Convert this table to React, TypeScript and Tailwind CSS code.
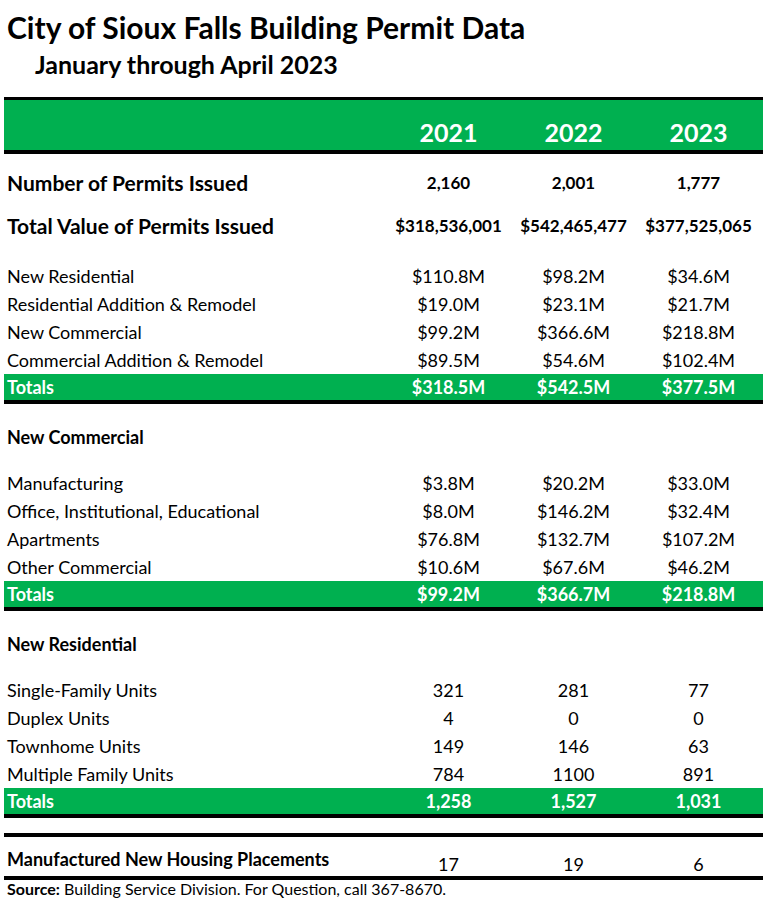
import React from 'react';

const GREEN = 'bg-[#00b050]';

type Row = { label: string; values: string[] };

const VALUE_ROWS: Row[] = [
  { label: 'New Residential', values: ['$110.8M', '$98.2M', '$34.6M'] },
  { label: 'Residential Addition & Remodel', values: ['$19.0M', '$23.1M', '$21.7M'] },
  { label: 'New Commercial', values: ['$99.2M', '$366.6M', '$218.8M'] },
  { label: 'Commercial Addition & Remodel', values: ['$89.5M', '$54.6M', '$102.4M'] },
];

const COMMERCIAL_ROWS: Row[] = [
  { label: 'Manufacturing', values: ['$3.8M', '$20.2M', '$33.0M'] },
  { label: 'Office, Institutional, Educational', values: ['$8.0M', '$146.2M', '$32.4M'] },
  { label: 'Apartments', values: ['$76.8M', '$132.7M', '$107.2M'] },
  { label: 'Other Commercial', values: ['$10.6M', '$67.6M', '$46.2M'] },
];

const RESIDENTIAL_ROWS: Row[] = [
  { label: 'Single-Family Units', values: ['321', '281', '77'] },
  { label: 'Duplex Units', values: ['4', '0', '0'] },
  { label: 'Townhome Units', values: ['149', '146', '63'] },
  { label: 'Multiple Family Units', values: ['784', '1100', '891'] },
];

const cols = 'grid grid-cols-[382px_125px_125px_125px] items-center';

function DataRow({ row }: { row: Row }) {
  return (
    <div className={`${cols} h-[28px] text-[18px]`}>
      <div className="pl-[3px]">{row.label}</div>
      {row.values.map((v, i) => (
        <div key={i} className="text-center">{v}</div>
      ))}
    </div>
  );
}

function TotalsRow({ values }: { values: string[] }) {
  return (
    <div className={`${cols} ${GREEN} h-[26px] border-b-4 border-black text-white font-bold text-[18px] box-content`}>
      <div className="pl-[3px]">Totals</div>
      {values.map((v, i) => (
        <div key={i} className="text-center">{v}</div>
      ))}
    </div>
  );
}

export default function App() {
  return (
    <div className="w-[769px] h-[909px] bg-white text-black font-['Lato',sans-serif] overflow-hidden">
      <div className="pt-[9px] pl-[7px] text-[30px] font-bold leading-[36px]">
        City of Sioux Falls Building Permit Data
      </div>
      <div className="pl-[35px] pt-[5px] text-[25px] font-bold leading-[28px]">
        January through April 2023
      </div>

      <div className="ml-[4px] w-[759px] mt-[19px]">
        {/* Header */}
        <div className={`${cols} ${GREEN} h-[50px] border-t-[3px] border-b-4 border-black box-content`}>
          <div />
          {['2021', '2022', '2023'].map(y => (
            <div key={y} className="text-center text-white font-bold text-[25px] pt-[14px]">{y}</div>
          ))}
        </div>

        {/* Summary */}
        <div className="pt-[8px]">
          <div className={`${cols} h-[42px] font-bold`}>
            <div className="pl-[3px] text-[21px]">Number of Permits Issued</div>
            {['2,160', '2,001', '1,777'].map(v => (
              <div key={v} className="text-center text-[17px]">{v}</div>
            ))}
          </div>
          <div className={`${cols} h-[43px] font-bold`}>
            <div className="pl-[3px] text-[21px]">Total Value of Permits Issued</div>
            {['$318,536,001', '$542,465,477', '$377,525,065'].map(v => (
              <div key={v} className="text-center text-[17px] whitespace-nowrap">{v}</div>
            ))}
          </div>
        </div>

        <div className="pt-[15px]">
          {VALUE_ROWS.map(r => <DataRow key={r.label} row={r} />)}
          <TotalsRow values={['$318.5M', '$542.5M', '$377.5M']} />
        </div>

        {/* New Commercial */}
        <div className="pt-[19px] h-[47px] flex items-center pl-[3px] font-bold text-[18px]">New Commercial</div>
        <div className="pt-[18px]">
          {COMMERCIAL_ROWS.map(r => <DataRow key={r.label} row={r} />)}
          <TotalsRow values={['$99.2M', '$366.7M', '$218.8M']} />
        </div>

        {/* New Residential */}
        <div className="pt-[19px] h-[47px] flex items-center pl-[3px] font-bold text-[18px]">New Residential</div>
        <div className="pt-[18px]">
          {RESIDENTIAL_ROWS.map(r => <DataRow key={r.label} row={r} />)}
          <TotalsRow values={['1,258', '1,527', '1,031']} />
        </div>

        {/* Manufactured */}
        <div className={`${cols} mt-[15px] h-[39px] border-t-4 border-b-4 border-black box-content`}>
          <div className="pl-[3px] font-bold text-[18px] self-start mt-[9px]">Manufactured New Housing Placements</div>
          {['17', '19', '6'].map(v => (
            <div key={v} className="text-center text-[18px] mt-[14px]">{v}</div>
          ))}
        </div>
        <div className="pl-[3px] text-[16px] leading-[18px]">
          <span className="font-bold">Source:</span> Building Service Division. For Question, call 367-8670.
        </div>
      </div>
    </div>
  );
}
